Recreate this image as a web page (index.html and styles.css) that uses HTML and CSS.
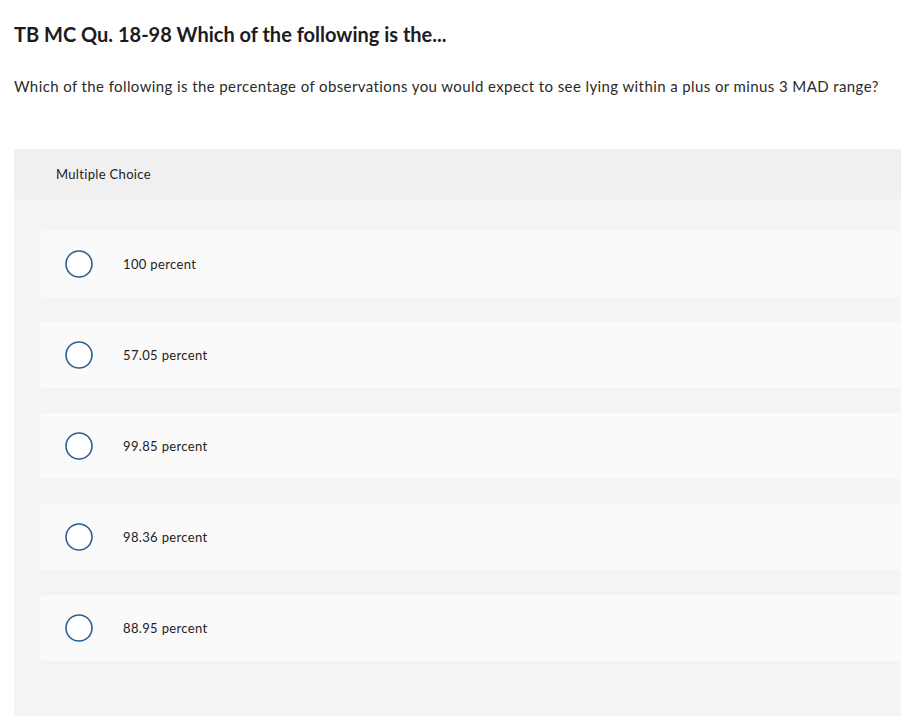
FILE: index.html
```html
<!DOCTYPE html>
<html lang="en">
<head>
<meta charset="utf-8">
<title>TB MC Qu. 18-98</title>
<link rel="stylesheet" href="styles.css">
</head>
<body>
<main class="page">
  <h1 class="title">TB MC Qu. 18-98 Which of the following is the...</h1>
  <p class="question">Which of the following is the percentage of observations you would expect to see lying within a plus or minus 3 MAD range?</p>
  <section class="choices">
    <div class="choices-head">Multiple Choice</div>
    <div class="choices-body">
      <label class="option">
        <svg class="radio" width="28" height="28" viewBox="0 0 28 28"><circle cx="14" cy="14" r="13" fill="#fff" stroke="#2d5f91" stroke-width="1.6"/></svg>
        <span class="option-text">100 percent</span>
      </label>
      <label class="option">
        <svg class="radio" width="28" height="28" viewBox="0 0 28 28"><circle cx="14" cy="14" r="13" fill="#fff" stroke="#2d5f91" stroke-width="1.6"/></svg>
        <span class="option-text">57.05 percent</span>
      </label>
      <label class="option">
        <svg class="radio" width="28" height="28" viewBox="0 0 28 28"><circle cx="14" cy="14" r="13" fill="#fff" stroke="#2d5f91" stroke-width="1.6"/></svg>
        <span class="option-text">99.85 percent</span>
      </label>
      <label class="option">
        <svg class="radio" width="28" height="28" viewBox="0 0 28 28"><circle cx="14" cy="14" r="13" fill="#fff" stroke="#2d5f91" stroke-width="1.6"/></svg>
        <span class="option-text">98.36 percent</span>
      </label>
      <label class="option">
        <svg class="radio" width="28" height="28" viewBox="0 0 28 28"><circle cx="14" cy="14" r="13" fill="#fff" stroke="#2d5f91" stroke-width="1.6"/></svg>
        <span class="option-text">88.95 percent</span>
      </label>
    </div>
  </section>
</main>
</body>
</html>
```
FILE: styles.css
```css
html, body {
  margin: 0;
  padding: 0;
  background: #ffffff;
}
body {
  font-family: Lato, "Open Sans", "Liberation Sans", sans-serif;
  color: #222222;
}
.page {
  padding: 0 0 0 14px;
  overflow: hidden;
}
.title {
  margin: 0;
  padding-top: 22px;
  font-size: 20px;
  line-height: 24px;
  font-weight: 700;
  color: #1c1c1c;
}
.question {
  margin: 0;
  padding-top: 30px;
  font-size: 15px;
  line-height: 20px;
  letter-spacing: 0.4px;
  color: #2b2b2b;
}
.choices {
  margin-top: 53px;
  border-radius: 3px 0 0 3px;
  background: #f4f4f4;
}
.choices-head {
  height: 50px;
  display: flex;
  align-items: center;
  padding-left: 42px;
  background: #f0f0f0;
  border-radius: 3px 0 0 0;
  font-size: 13px;
  letter-spacing: 0.33px;
  color: #222222;
}
.choices-body {
  display: flex;
  flex-direction: column;
  gap: 25px;
  padding: 32px 0 55px 26px;
}
.option {
  height: 66px;
  display: flex;
  align-items: center;
  padding-left: 25px;
  background: #fafafa;
  border-radius: 3px 0 0 3px;
}
.radio {
  flex: none;
  display: block;
}
.option-text {
  margin-left: 30px;
  font-size: 13px;
  letter-spacing: 0.35px;
  color: #222222;
}
```
